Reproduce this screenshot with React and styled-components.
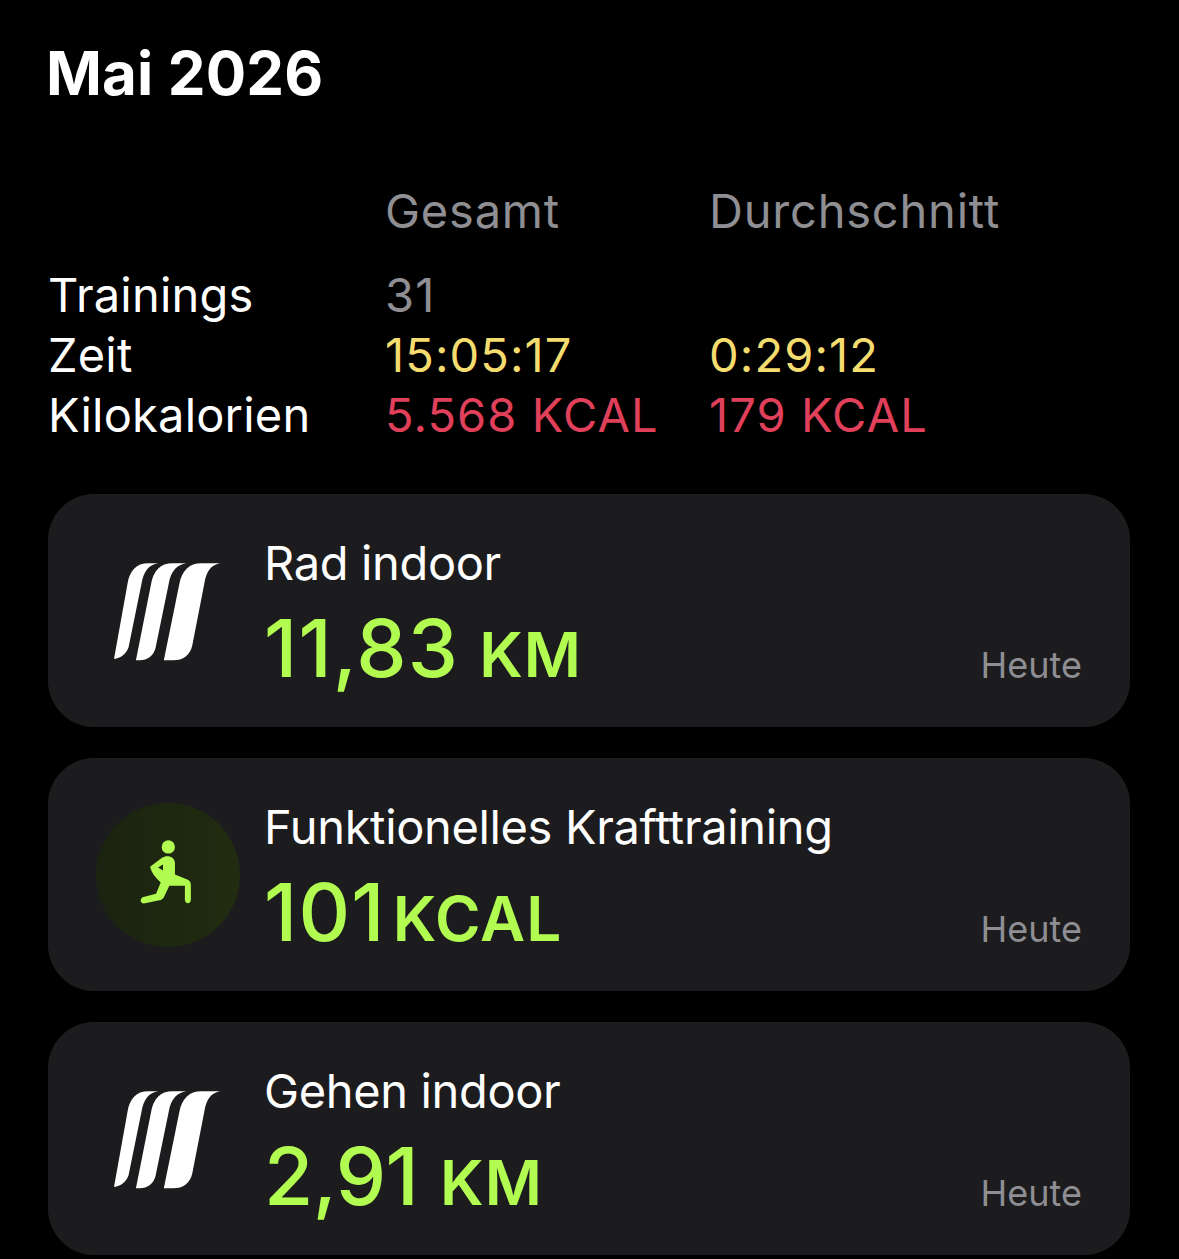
import styled, { createGlobalStyle } from "styled-components";

const GlobalStyle = createGlobalStyle`
  html, body {
    margin: 0;
    padding: 0;
    background: #000;
    height: 1259px;
    overflow: hidden;
  }
`;

const stats = [
  { label: "Trainings", total: "31", avg: "", color: "#8e8e93" },
  { label: "Zeit", total: "15:05:17", avg: "0:29:12", color: "#f5dc6e" },
  { label: "Kilokalorien", total: "5.568 KCAL", avg: "179 KCAL", color: "#e0405a" },
];

const workouts = [
  { name: "Rad indoor", value: "11,83", unit: "KM", gap: 20, tight: false, icon: "logo" },
  { name: "Funktionelles Krafttraining", value: "101", unit: "KCAL", gap: 7, tight: false, icon: "lunge" },
  { name: "Gehen indoor", value: "2,91", unit: "KM", gap: 22, tight: true, icon: "logo" },
];

const App = () => {
  return (
    <Page>
      <GlobalStyle />
      <Title>Mai 2026</Title>
      <Summary>
        <span />
        <HeadCell>Gesamt</HeadCell>
        <HeadCell>Durchschnitt</HeadCell>
        <HeadGap />
        {stats.map((s) => (
          <Row key={s.label}>
            <Label>{s.label}</Label>
            <Stat $color={s.color}>{s.total}</Stat>
            <Stat $color={s.color}>{s.avg}</Stat>
          </Row>
        ))}
      </Summary>
      <Cards>
        {workouts.map((w) => (
          <Card key={w.name}>
            <IconSlot>{w.icon === "logo" ? <StripeLogo /> : <LungeBadge />}</IconSlot>
            <Info>
              <Name>{w.name}</Name>
              <Value $tight={w.tight}>
                {w.value}
                <Unit $gap={w.gap}>{w.unit}</Unit>
              </Value>
            </Info>
            <Day>Heute</Day>
          </Card>
        ))}
      </Cards>
    </Page>
  );
};

const StripeLogo = () => (
  <Logo width="113" height="103" viewBox="60 60 340 310">
    <g fill="#fff">
      <path d="M72 358 L112 135 C118 92 140 70 175 70 L205 70 C178 74 162 92 155 130 L116 322 C110 342 92 356 72 358 Z" />
      <path d="M138 362 L183 135 C190 92 212 70 248 70 L290 70 C262 74 244 92 237 130 L197 325 C190 350 172 362 150 362 Z" />
      <path d="M222 362 L268 135 C276 92 298 70 335 70 L392 70 C366 74 350 92 344 130 L308 315 C302 346 280 362 250 362 Z" />
    </g>
  </Logo>
);

const LungeBadge = () => (
  <Badge>
    <LungeIcon width="52" height="65" viewBox="150 134 156 196">
      <circle cx="235" cy="155" r="20" fill="#b2fb50" />
      <path
        fill="#b2fb50"
        d="M180 215 L215 188 C232 178 255 184 255 205 L255 238 L290 252 C298 254 303 260 303 268 L303 314 C303 328 285 328 285 314 L285 272 L238 272 L222 306 C219 312 214 315 208 316 L165 325 C150 328 147 310 160 306 L198 296 L212 262 C196 248 184 232 180 215 Z M204 217 L219 226 L219 208 Z"
        fillRule="evenodd"
      />
    </LungeIcon>
  </Badge>
);

export default App;

const Page = styled.div`
  width: 1179px;
  height: 1259px;
  box-sizing: border-box;
  padding: 35px 49px 0 48px;
  overflow: hidden;
  background: #000;
  color: #fff;
  font-family: Inter, "Liberation Sans", sans-serif;
`;

const Title = styled.h1`
  margin: 0 0 0 -2px;
  font-size: 60px;
  line-height: 76px;
  font-weight: 700;
  letter-spacing: 0.15px;
`;

const Summary = styled.div`
  display: grid;
  grid-template-columns: 337px 324px 1fr;
  margin-top: 70px;
  font-size: 47px;
  line-height: 60px;
`;

const HeadCell = styled.div`
  color: #8e8e93;
  letter-spacing: 0.8px;
`;

const HeadGap = styled.div`
  grid-column: 1 / -1;
  height: 24px;
`;

const Row = styled.div`
  display: contents;
`;

const Label = styled.div`
  color: #fff;
  letter-spacing: 0.2px;
`;

const Stat = styled.div`
  color: ${(p) => p.$color};
  letter-spacing: 1.1px;
`;

const Cards = styled.div`
  display: flex;
  flex-direction: column;
  gap: 31px;
  margin-top: 49px;
`;

const Card = styled.div`
  display: flex;
  align-items: stretch;
  height: 233px;
  flex-shrink: 0;
  box-sizing: border-box;
  padding: 0 48px;
  border-radius: 46px;
  background: #1c1c1e;
`;

const IconSlot = styled.div`
  width: 144px;
  flex-shrink: 0;
  display: flex;
  align-items: center;
  justify-content: center;
`;

const Logo = styled.svg`
  margin: 2px 0 0 -3px;
`;

const Badge = styled.div`
  width: 144px;
  height: 144px;
  border-radius: 50%;
  background: linear-gradient(90deg, #1b2310, #212c10);
  display: flex;
  align-items: center;
  justify-content: center;
`;

const LungeIcon = styled.svg`
  margin: -5px 0 0 -4px;
`;

const Info = styled.div`
  flex: 1;
  margin-left: 24px;
  padding-top: 39px;
`;

const Name = styled.div`
  font-size: 47px;
  line-height: 60px;
  color: #fff;
  letter-spacing: -0.35px;
`;

const Value = styled.div`
  margin-top: 10px;
  font-size: 80px;
  line-height: 90px;
  font-weight: 500;
  letter-spacing: ${(p) => (p.$tight ? "-0.6px" : "1.2px")};
  color: #b2fb50;
`;

const Unit = styled.span`
  font-size: 62px;
  font-weight: 600;
  letter-spacing: 1px;
  margin-left: ${(p) => p.$gap}px;
`;

const Day = styled.div`
  align-self: flex-end;
  padding-bottom: 40px;
  font-size: 36px;
  line-height: 44px;
  color: #8e8e93;
`;
